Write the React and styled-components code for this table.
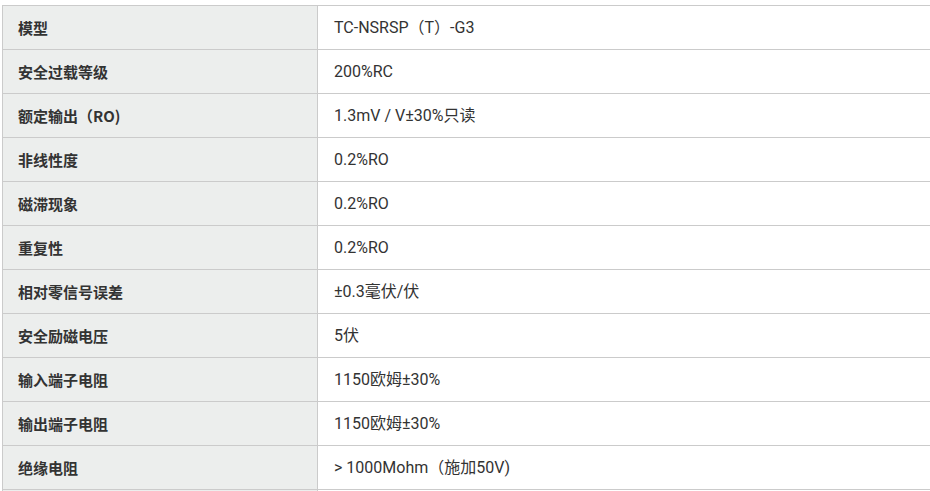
import styled, { createGlobalStyle } from "styled-components";

const GlobalStyle = createGlobalStyle`
  html, body {
    margin: 0;
    padding: 0;
    background: #fff;
    overflow: hidden;
  }
`;

const Wrap = styled.div`
  padding: 5px 0 0 2px;
  width: 960px;
`;

const Table = styled.table`
  border-collapse: collapse;
  width: 100%;
  table-layout: fixed;
`;

const Row = styled.tr`
  height: 44px;
`;

const Label = styled.th`
  width: 299px;
  padding: 0 0 0 15px;
  background-color: #eceeed;
  border: 1px solid #cbcbcb;
  text-align: left;
  font-family: "Noto Sans CJK SC", "Noto Sans", sans-serif;
  font-weight: 700;
  font-size: 15px;
  color: #333;
  line-height: 20px;
`;

const Value = styled.td`
  padding: 0 0 0 16px;
  border: 1px solid #cbcbcb;
  border-right: none;
  font-family: Roboto, "Noto Sans CJK SC", sans-serif;
  font-size: 16px;
  color: #333;
  line-height: 20px;
`;

const specs = [
  ["模型", "TC-NSRSP（T）-G3"],
  ["安全过载等级", "200%RC"],
  ["额定输出（RO)", "1.3mV / V±30%只读"],
  ["非线性度", "0.2%RO"],
  ["磁滞现象", "0.2%RO"],
  ["重复性", "0.2%RO"],
  ["相对零信号误差", "±0.3毫伏/伏"],
  ["安全励磁电压", "5伏"],
  ["输入端子电阻", "1150欧姆±30%"],
  ["输出端子电阻", "1150欧姆±30%"],
  ["绝缘电阻", "> 1000Mohm（施加50V)"],
  ["", ""],
];

export default function App() {
  return (
    <>
      <GlobalStyle />
      <Wrap>
        <Table>
          <tbody>
            {specs.map(([k, v], i) => (
              <Row key={i}>
                <Label>{k}</Label>
                <Value>{v}</Value>
              </Row>
            ))}
          </tbody>
        </Table>
      </Wrap>
    </>
  );
}
